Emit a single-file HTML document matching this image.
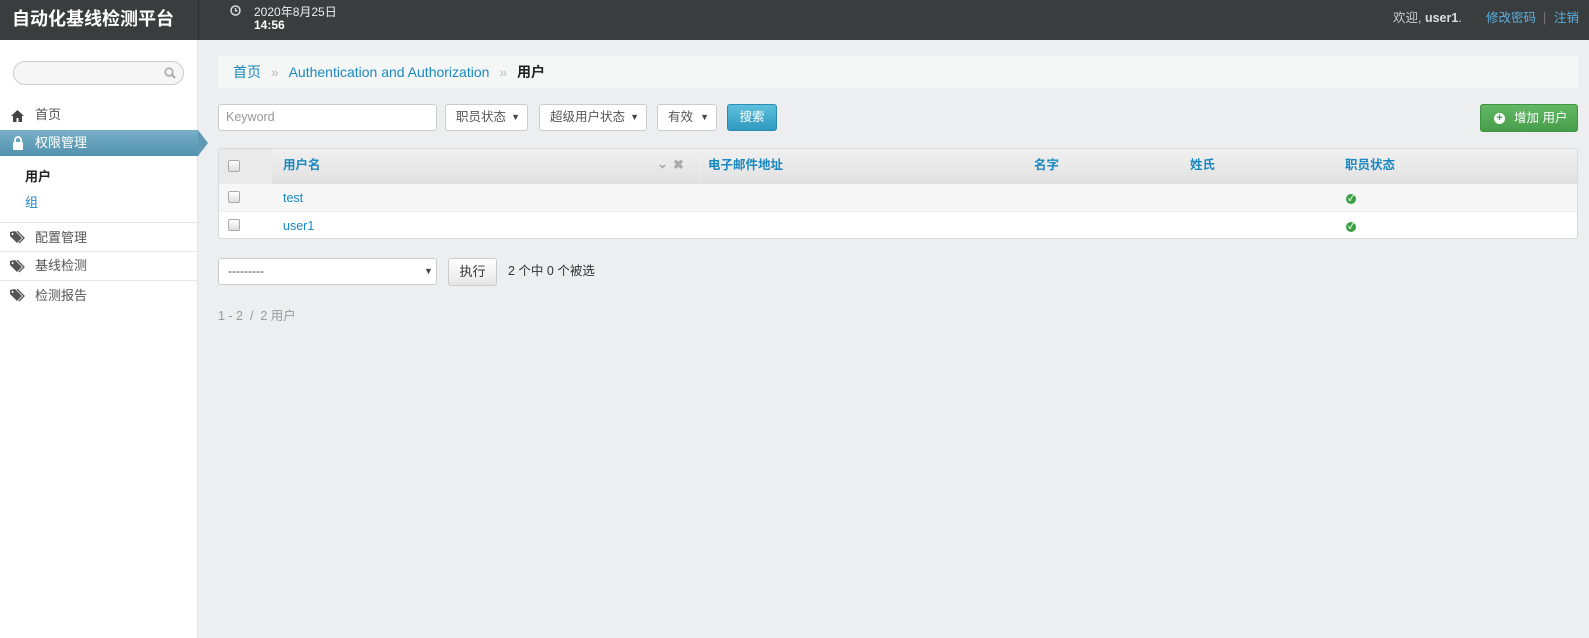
<!DOCTYPE html>
<html><head><meta charset="utf-8"><style>
*{box-sizing:border-box;margin:0;padding:0}
body{width:1589px;height:638px;overflow:hidden;background:#eceef0;font-family:"Liberation Sans","Noto Sans CJK SC",sans-serif;font-size:13px;line-height:1.2;color:#555;position:relative}
.a{position:absolute}
#hd{left:0;top:0;width:1589px;height:40px;background:#3a3d3e}
#sb{left:0;top:40px;width:198px;height:598px;background:#fff;border-right:1px solid #e2e4e6}
.lnk{color:#1a88c0}
.inp{background:#fff;border:1px solid #ccc;border-radius:3px;height:27px}
.sel{font-size:12.5px;color:#555;padding:0 0 0 10px;line-height:25px}
.sel:after{content:"▼";position:absolute;right:7px;top:0;font-size:9px;color:#444}
.th{color:#1a88c0;font-weight:bold;font-size:12.5px}
.cb{width:12px;height:12px;border:1px solid #aaa;border-radius:2px;background:linear-gradient(#fff,#ddd)}
.ok{width:10px;height:10px;border-radius:50%;background:#3aa043;color:#fff;font-size:8px;line-height:10px;text-align:center;font-weight:bold}
.hr{left:0;width:197px;height:1px;background:#e6e6e6}
</style></head><body>
<div id="hd" class="a">
 <div class="a" style="left:12px;top:9px;color:#fff;font-weight:bold;font-size:18px">自动化基线检测平台</div>
 <div class="a" style="left:198px;top:0;width:1px;height:40px;background:#2c2e2f"></div>
 <svg class="a" style="left:230px;top:5px" width="11" height="11" viewBox="0 0 11 11"><circle cx="5.5" cy="5.5" r="4.5" fill="none" stroke="#ddd" stroke-width="1.5"/><path d="M5.5 3v2.8h2" stroke="#ddd" stroke-width="1.3" fill="none"/></svg>
 <div class="a" style="left:254px;top:5px;color:#eee;font-size:12px">2020年8月25日</div>
 <div class="a" style="left:254px;top:18px;color:#fff;font-size:12px;font-weight:bold">14:56</div>
 <div class="a" style="left:1393px;top:11px;font-size:12.5px;color:#ccc">欢迎, <b style="color:#ddd">user1</b>.</div>
 <div class="a" style="left:1486px;top:11px;font-size:12.5px;color:#5ab0e0">修改密码</div>
 <div class="a" style="left:1543px;top:11px;font-size:12.5px;color:#777">|</div>
 <div class="a" style="left:1554px;top:11px;font-size:12.5px;color:#5ab0e0">注销</div>
</div>
<div id="sb" class="a"></div>
<div class="a" style="left:13px;top:61px;width:171px;height:24px;border:1px solid #ccc;border-radius:12px;background:#f6f6f6"></div>
<svg class="a" style="left:164px;top:67px" width="12" height="12"><circle cx="5" cy="5" r="3.8" fill="none" stroke="#aaa" stroke-width="1.6"/><path d="M8 8l3 3" stroke="#aaa" stroke-width="2"/></svg>
<svg class="a" style="left:11px;top:110px" width="13" height="12"><path d="M6.5 0L0 6h2v6h3.5V8h2v4H11V6h2z" fill="#444"/></svg>
<div class="a" style="left:35px;top:107px">首页</div>
<div class="a" style="left:0;top:130px;width:198px;height:26px;background:linear-gradient(#79afc6,#5191ae)"></div>
<div class="a" style="left:198px;top:130px;width:0;height:0;border-top:13px solid transparent;border-bottom:13px solid transparent;border-left:10px solid #6099b3"></div>
<svg class="a" style="left:12px;top:136px" width="12" height="14"><path d="M3 6V4a3 3 0 016 0v2" stroke="#fff" stroke-width="1.8" fill="none"/><rect x="1" y="6" width="10" height="8" rx="1" fill="#fff"/></svg>
<div class="a" style="left:35px;top:135px;color:#fff">权限管理</div>
<div class="a" style="left:25px;top:169px;color:#222;font-weight:bold">用户</div>
<div class="a lnk" style="left:25px;top:195px">组</div>
<div class="a hr" style="top:222px"></div>
<div class="a hr" style="top:251px"></div>
<div class="a hr" style="top:280px"></div>
<svg class="a" style="left:10px;top:231px" width="16" height="13"><path d="M0 1v4l7 7 5-5-7-7z" fill="#555"/><path d="M7 0l7 7-5 5" fill="none" stroke="#555" stroke-width="1.3"/><circle cx="2.5" cy="3" r="1" fill="#fff"/></svg>
<div class="a" style="left:35px;top:230px">配置管理</div>
<svg class="a" style="left:10px;top:260px" width="16" height="13"><path d="M0 1v4l7 7 5-5-7-7z" fill="#555"/><path d="M7 0l7 7-5 5" fill="none" stroke="#555" stroke-width="1.3"/><circle cx="2.5" cy="3" r="1" fill="#fff"/></svg>
<div class="a" style="left:35px;top:258px">基线检测</div>
<svg class="a" style="left:10px;top:289px" width="16" height="13"><path d="M0 1v4l7 7 5-5-7-7z" fill="#555"/><path d="M7 0l7 7-5 5" fill="none" stroke="#555" stroke-width="1.3"/><circle cx="2.5" cy="3" r="1" fill="#fff"/></svg>
<div class="a" style="left:35px;top:288px">检测报告</div>

<div class="a" style="left:218px;top:56px;width:1360px;height:32px;background:#f5f6f6"></div>
<div class="a" style="left:233px;top:64px;font-size:14px"><span class="lnk">首页</span> <span style="color:#bbb;margin:0 6px">»</span> <span class="lnk">Authentication and Authorization</span> <span style="color:#bbb;margin:0 6px">»</span> <b style="color:#222">用户</b></div>

<div class="a inp" style="left:218px;top:104px;width:219px;color:#999;font-size:12.5px;padding-left:7px;line-height:25px">Keyword</div>
<div class="a inp sel" style="left:445px;top:104px;width:83px">职员状态</div>
<div class="a inp sel" style="left:539px;top:104px;width:108px">超级用户状态</div>
<div class="a inp sel" style="left:657px;top:104px;width:60px">有效</div>
<div class="a" style="left:727px;top:104px;width:50px;height:27px;border-radius:3px;background:linear-gradient(#5dc0dc,#2f9ac0);border:1px solid #2a8cb0;color:#fff;text-align:center;line-height:25px;font-size:12.5px">搜索</div>
<div class="a" style="left:1480px;top:104px;width:98px;height:28px;border-radius:3px;background:linear-gradient(#62b865,#479e4a);border:1px solid #3f9342;color:#fff;font-size:12.5px;line-height:26px;padding-left:33px">增加 用户</div>
<div class="a" style="left:1494px;top:113px;width:11px;height:11px;border-radius:50%;background:#fff;color:#4aa04d;font-size:11px;line-height:10px;text-align:center;font-weight:bold">+</div>

<div class="a" style="left:218px;top:148px;width:1360px;height:91px;background:#fff;border:1px solid #d8dadc;border-radius:3px;overflow:hidden">
 <div class="a" style="left:0;top:0;width:1360px;height:35px;background:linear-gradient(#f0f0f0,#e2e2e2);border-bottom:1px solid #ddd"></div>
 <div class="a" style="left:0;top:0;width:53px;height:35px;background:#eaeaea"></div>
 <div class="a" style="left:480px;top:0;width:1px;height:63px;background:#ececec"></div>
 <div class="a" style="left:0;top:35px;width:1360px;height:28px;background:#f7f7f7;border-bottom:1px solid #eee"></div>
 <div class="a cb" style="left:9px;top:11px"></div>
 <div class="a cb" style="left:9px;top:42px"></div>
 <div class="a cb" style="left:9px;top:70px"></div>
 <div class="a th" style="left:64px;top:9px">用户名</div>
 <div class="a" style="left:438px;top:7px;color:#aaa;font-size:13px;font-weight:bold">⌄</div>
 <div class="a" style="left:454px;top:8px;color:#aaa;font-size:13px;font-weight:bold">✖</div>
 <div class="a th" style="left:489px;top:9px">电子邮件地址</div>
 <div class="a th" style="left:815px;top:9px">名字</div>
 <div class="a th" style="left:971px;top:9px">姓氏</div>
 <div class="a th" style="left:1126px;top:9px">职员状态</div>
 <div class="a lnk" style="left:64px;top:42px;font-size:12.5px">test</div>
 <div class="a lnk" style="left:64px;top:70px;font-size:12.5px">user1</div>
 <div class="a ok" style="left:1127px;top:45px">✓</div>
 <div class="a ok" style="left:1127px;top:73px">✓</div>
</div>

<div class="a inp" style="left:218px;top:258px;width:219px;font-size:12px;padding-left:9px;line-height:25px;color:#444">---------</div>
<div class="a" style="left:424px;top:266px;font-size:9px;color:#444">▼</div>
<div class="a" style="left:448px;top:258px;width:49px;height:28px;border:1px solid #ccc;border-radius:3px;background:linear-gradient(#fff,#e6e6e6);text-align:center;line-height:26px;color:#333">执行</div>
<div class="a" style="left:508px;top:264px;color:#333;font-size:12.5px">2 个中 0 个被选</div>
<div class="a" style="left:218px;top:309px;color:#999;font-size:12.5px">1 - 2 &nbsp;/ &nbsp;2 用户</div>
</body></html>
